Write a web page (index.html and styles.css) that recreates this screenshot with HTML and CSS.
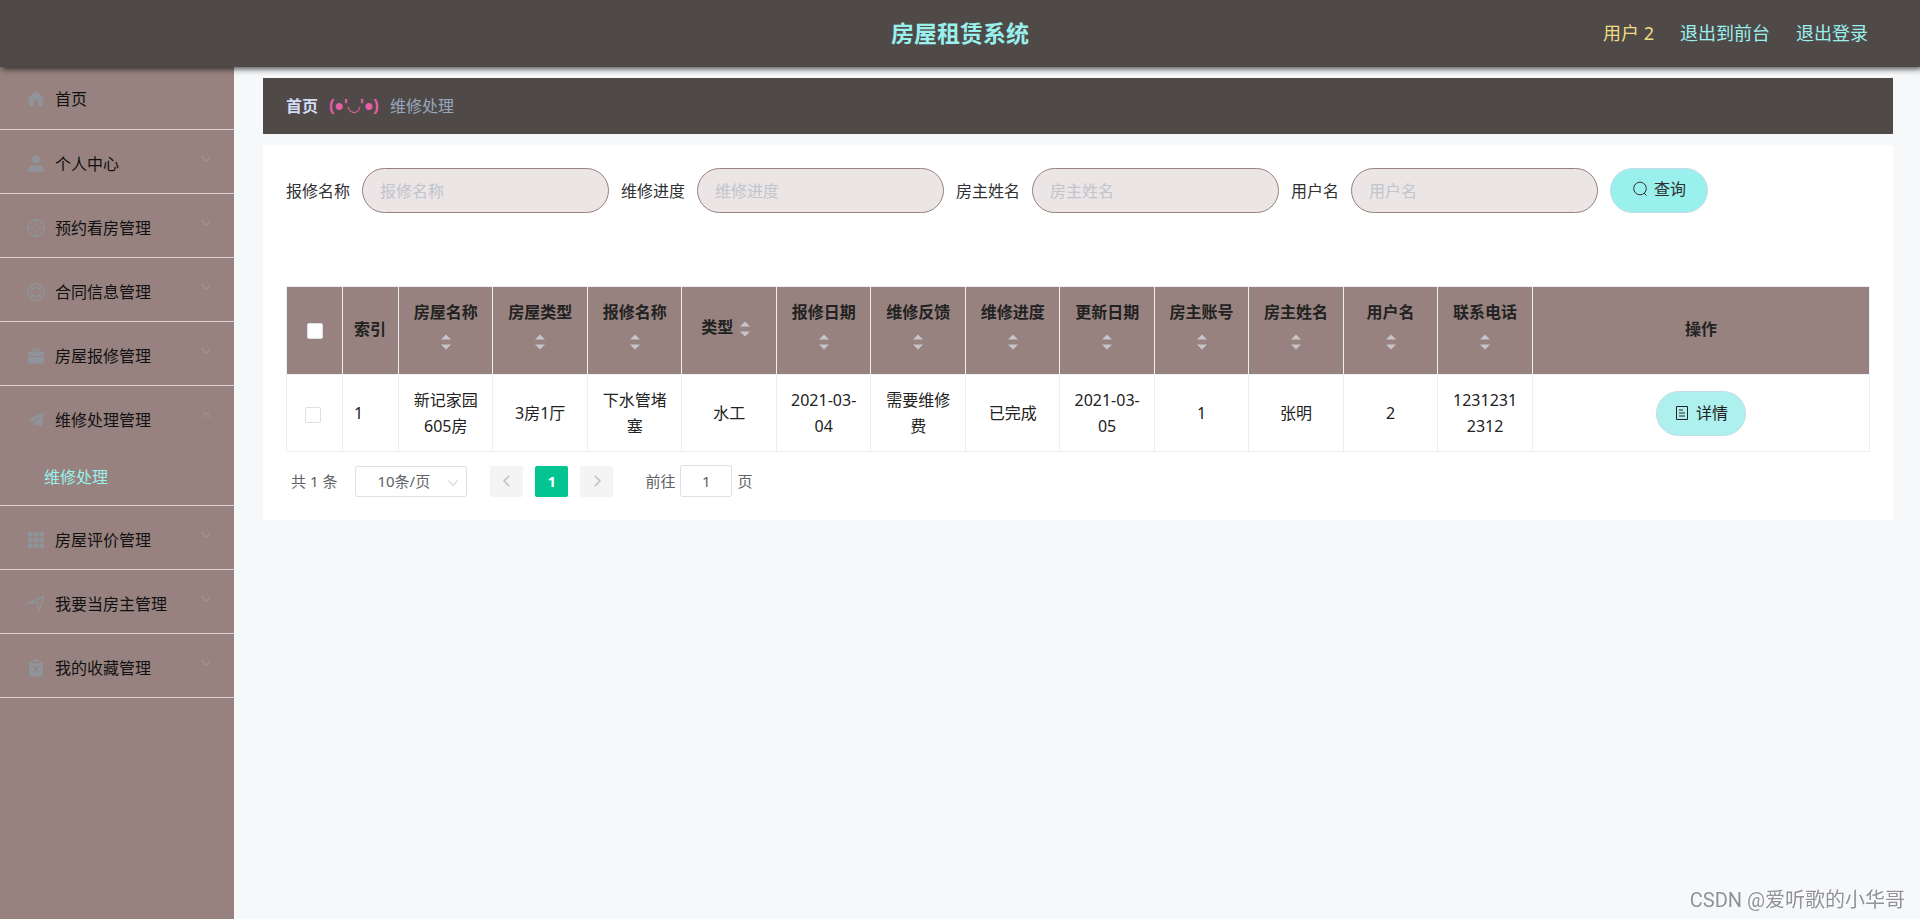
FILE: index.html
```html
<!DOCTYPE html>
<html lang="zh-CN">
<head>
<meta charset="utf-8">
<title>房屋租赁系统</title>
<link rel="stylesheet" href="styles.css">
</head>
<body>
<svg class="sprite" aria-hidden="true">
  <symbol id="down" viewBox="0 0 12 12"><path d="M1.500 3.500 6 8.500l4.500-5" fill="none" stroke="currentColor"/></symbol>
  <symbol id="up" viewBox="0 0 12 12"><path d="M1.500 8.500 6 3.500l4.500 5" fill="none" stroke="currentColor"/></symbol>
  <symbol id="sort" viewBox="0 0 10 16"><path d="M0 5.500 5 .5l5 5zM0 10.500l5 5 5-5z" fill="currentColor"/></symbol>
</svg>
<header class="topbar">
  <h1 class="topbar-title">房屋租赁系统</h1>
  <nav class="topbar-nav">
    <span class="user">用户 2</span>
    <a class="top-link" href="#">退出到前台</a>
    <a class="top-link" href="#">退出登录</a>
  </nav>
</header>
<div class="layout">
  <nav class="sidebar">
    <ul class="menu">
      <li class="menu-group home"><a class="menu-item" href="#">
        <svg class="menu-icon" viewBox="0 0 18 18"><path d="M9 1 .800 8v1.500h1.400V16.500h4.600v-4a2.200 2.200 0 0 1 4.400 0v4h4.600V9.500h1.400V8z" fill="currentColor"/></svg>
        <span class="menu-text">首页</span></a></li>
      <li class="menu-group"><button class="menu-item" type="button">
        <svg class="menu-icon" viewBox="0 0 18 18"><circle cx="9" cy="4.500" r="4" fill="currentColor"/><path d="M1.500 17v-2.500a4 4 0 0 1 4-4h7a4 4 0 0 1 4 4V17z" fill="currentColor"/></svg>
        <span class="menu-text">个人中心</span><svg class="menu-arrow"><use href="#down"/></svg></button></li>
      <li class="menu-group"><button class="menu-item" type="button">
        <svg class="menu-icon" viewBox="0 0 18 18"><path d="M9 .5v6M9 11.500v6M.5 9h6M11.500 9h6" fill="none" stroke="currentColor"/><circle cx="9" cy="9" r="8.300" fill="none" stroke="currentColor" stroke-width="1.400"/></svg>
        <span class="menu-text">预约看房管理</span><svg class="menu-arrow"><use href="#down"/></svg></button></li>
      <li class="menu-group"><button class="menu-item" type="button">
        <svg class="menu-icon" viewBox="0 0 18 18"><g fill="none" stroke="currentColor" stroke-width="1.400"><circle cx="9" cy="9" r="8.200"/><circle cx="9" cy="9" r="4.500"/><path d="m3 3 3 3M12 12l3 3M15 3l-3 3M6 12l-3 3"/></g></svg>
        <span class="menu-text">合同信息管理</span><svg class="menu-arrow"><use href="#down"/></svg></button></li>
      <li class="menu-group"><button class="menu-item" type="button">
        <svg class="menu-icon" viewBox="0 0 18 18"><path d="M1 9V4.500h4.500V1.500h7v3H17V9zM6.500 4.500h5v-2h-5zM1 10h16v6.500H1z" fill="currentColor" fill-rule="evenodd"/></svg>
        <span class="menu-text">房屋报修管理</span><svg class="menu-arrow"><use href="#down"/></svg></button></li>
      <li class="menu-group"><button class="menu-item" type="button" aria-expanded="true">
        <svg class="menu-icon" viewBox="0 0 18 18"><path d="M1 8.500 17 1 14.500 15.500 10 13.500 7.500 16.500v-4.500L14 4.500 6 11z" fill="currentColor"/></svg>
        <span class="menu-text">维修处理管理</span><svg class="menu-arrow"><use href="#up"/></svg></button>
        <a class="submenu-item" href="#">维修处理</a></li>
      <li class="menu-group"><button class="menu-item" type="button">
        <svg class="menu-icon" viewBox="0 0 18 18"><path d="M1 1h4.500v4.500H1zM6.750 1h4.500v4.500h-4.500zM12.500 1H17v4.500h-4.500zM1 6.750h4.500v4.500H1zM6.750 6.750h4.500v4.500h-4.500zM12.500 6.750H17v4.500h-4.500zM1 12.500h4.500V17H1zM6.750 12.500h4.500V17h-4.500zM12.500 12.500H17V17h-4.500z" fill="currentColor"/></svg>
        <span class="menu-text">房屋评价管理</span><svg class="menu-arrow"><use href="#down"/></svg></button></li>
      <li class="menu-group"><button class="menu-item" type="button">
        <svg class="menu-icon" viewBox="0 0 18 18"><path d="M1.500 8 16.500 1.500 12 16.500 10.500 7.500z" fill="none" stroke="currentColor" stroke-width="1.400" stroke-linejoin="round"/></svg>
        <span class="menu-text">我要当房主管理</span><svg class="menu-arrow"><use href="#down"/></svg></button></li>
      <li class="menu-group"><button class="menu-item" type="button">
        <svg class="menu-icon" viewBox="0 0 18 18"><path d="M2 2.500h3v1.500h8V2.500h3V17.500H2zM6 .5h6V3H6zM5.800 7.300 8.200 10 5.800 12.700 6.600 13.500 9 10.900l2.400 2.600.8-.8L9.800 10l2.400-2.700-.8-.8L9 9.100 6.600 6.500z" fill="currentColor" fill-rule="evenodd"/></svg>
        <span class="menu-text">我的收藏管理</span><svg class="menu-arrow"><use href="#down"/></svg></button></li>
    </ul>
  </nav>
  <main class="main">
    <nav class="breadcrumb">
      <a class="crumb-home" href="#">首页</a>
      <span class="crumb-face">(●'◡'●)</span>
      <span class="crumb-current">维修处理</span>
    </nav>
    <section class="card">
      <form class="search">
        <div class="field"><label for="f1">报修名称</label><input id="f1" type="text" placeholder="报修名称"></div>
        <div class="field"><label for="f2">维修进度</label><input id="f2" type="text" placeholder="维修进度"></div>
        <div class="field"><label for="f3">房主姓名</label><input id="f3" type="text" placeholder="房主姓名"></div>
        <div class="field"><label for="f4">用户名</label><input id="f4" type="text" placeholder="用户名"></div>
        <button class="pill query" type="button"><svg class="pill-icon" viewBox="0 0 16 16"><circle cx="8" cy="7.500" r="6.300" fill="none" stroke="currentColor"/><path d="m12 12 2.500 2.500" stroke="currentColor"/></svg>查询</button>
      </form>
      <table class="grid">
        <colgroup><col class="col-small"><col class="col-small"><col span="12"><col class="col-action"></colgroup>
        <thead>
          <tr>
            <th><input class="check check-all" type="checkbox" aria-label="全选"></th>
            <th class="left">索引</th>
            <th>房屋名称<svg class="sort"><use href="#sort"/></svg></th>
            <th>房屋类型<svg class="sort"><use href="#sort"/></svg></th>
            <th>报修名称<svg class="sort"><use href="#sort"/></svg></th>
            <th>类型<svg class="sort"><use href="#sort"/></svg></th>
            <th>报修日期<svg class="sort"><use href="#sort"/></svg></th>
            <th>维修反馈<svg class="sort"><use href="#sort"/></svg></th>
            <th>维修进度<svg class="sort"><use href="#sort"/></svg></th>
            <th>更新日期<svg class="sort"><use href="#sort"/></svg></th>
            <th>房主账号<svg class="sort"><use href="#sort"/></svg></th>
            <th>房主姓名<svg class="sort"><use href="#sort"/></svg></th>
            <th>用户名<svg class="sort"><use href="#sort"/></svg></th>
            <th>联系电话<svg class="sort"><use href="#sort"/></svg></th>
            <th>操作</th>
          </tr>
        </thead>
        <tbody>
          <tr>
            <td class="pick"><input class="check" type="checkbox" aria-label="选择第 1 行"></td>
            <td class="left">1</td>
            <td>新记家园605房</td>
            <td>3房1厅</td>
            <td>下水管堵塞</td>
            <td>水工</td>
            <td>2021-03-04</td>
            <td>需要维修费</td>
            <td>已完成</td>
            <td>2021-03-05</td>
            <td>1</td>
            <td>张明</td>
            <td>2</td>
            <td>12312312312</td>
            <td class="action"><button class="pill detail" type="button"><svg class="pill-icon" viewBox="0 0 16 16"><path d="M2.500 1.500h11v13h-11zM5 5h4M5 8h6M5 11h6" fill="none" stroke="currentColor"/></svg>详情</button></td>
          </tr>
        </tbody>
      </table>
      <div class="pager">
        <span class="total">共 1 条</span>
        <span class="size"><select aria-label="每页条数"><option>10条/页</option></select><svg class="size-arrow"><use href="#down"/></svg></span>
        <button class="page" type="button" aria-label="上一页"><svg class="page-icon" viewBox="0 0 12 12"><path d="M8 1.500 3.500 6 8 10.500" fill="none" stroke="currentColor" stroke-width="1.500"/></svg></button>
        <button class="page active" type="button">1</button>
        <button class="page" type="button" aria-label="下一页"><svg class="page-icon" viewBox="0 0 12 12"><path d="M4 1.500 8.500 6 4 10.500" fill="none" stroke="currentColor" stroke-width="1.500"/></svg></button>
        <label class="jump">前往<input type="text" value="1">页</label>
      </div>
    </section>
  </main>
</div>
<p class="watermark">CSDN @爱听歌的小华哥</p>
</body>
</html>
```
FILE: styles.css
```css
* { box-sizing: border-box; }
body {
  margin: 0;
  min-height: 100vh;
  display: flex;
  flex-direction: column;
  background: #f6f8fa;
  color: #303133;
  font: 16px/26px "Noto Sans", "Noto Sans CJK SC", sans-serif;
}
button, input, select { font: inherit; color: inherit; margin: 0; }
button { cursor: pointer; }
a { text-decoration: none; color: inherit; }
.sprite { display: none; }

.topbar {
  display: grid;
  grid-template-columns: 1fr auto 1fr;
  align-items: center;
  height: 67px;
  padding: 0 52px 2px;
  background: #4f4948;
  box-shadow: 2px 2px 6px rgba(0, 0, 0, .7);
  z-index: 1;
}
.topbar-title { grid-column: 2; margin: 0; font-size: 23px; color: #99f0ed; }
.topbar-nav { display: flex; justify-content: flex-end; gap: 26px; font-size: 18px; color: #99f0ed; }
.user { color: #f0dc82; }

.layout { display: flex; flex: 1; }
.sidebar { flex: none; width: 234px; background: #97827f; }
.menu { list-style: none; margin: 0; padding: 0; }
.menu-group { border-bottom: 1px solid #ded3d1; }
.menu-item {
  display: flex;
  align-items: center;
  width: 100%;
  height: 63px;
  padding: 5px 22px 0 27px;
  border: 0;
  background: none;
  color: #111;
  text-align: left;
}
.home .menu-item { height: 62px; padding-top: 2px; }
.menu-icon { width: 18px; height: 18px; margin-right: 10px; color: #909399; }
.menu-text { flex: 1; }
.menu-arrow { width: 12px; height: 12px; margin-bottom: 10px; color: #a89a9a; }
.submenu-item { display: block; padding: 15px 44px; color: #99f0ed; }

.main { flex: 1; min-width: 0; padding: 11px 27px 40px 29px; }
.breadcrumb {
  display: flex;
  align-items: center;
  gap: 11px;
  height: 56px;
  padding: 0 23px;
  background: #4f4948;
}
.crumb-home { font-weight: 700; color: #d3dcf5; }
.crumb-face { font-family: "Liberation Sans", "DejaVu Sans", sans-serif; font-weight: 700; color: #e85fa8; }
.crumb-current { color: #97a8be; }
.card { margin-top: 11px; padding: 23px; background: #fff; }

.search { display: flex; flex-wrap: wrap; gap: 12px; margin-bottom: 73px; }
.field { display: flex; align-items: center; gap: 12px; }
.field input {
  width: 247px;
  height: 45px;
  padding: 0 17px;
  border: 1px solid #97827f;
  border-radius: 23px;
  background: #ebe5e5;
}
.field input::placeholder { color: #c0c4cc; }
.pill {
  display: inline-flex;
  align-items: center;
  gap: 6px;
  height: 45px;
  border: 1px solid #c5dbe6;
  border-radius: 23px;
}
.pill-icon { width: 16px; height: 16px; }
.query { padding: 0 21px 3px; background: #99f0ed; }
.detail { padding: 0 17px; background: #adf0ee; }

.grid {
  width: 100%;
  table-layout: fixed;
  border-collapse: collapse;
  border: 1px solid #ebeef5;
  color: #222;
}
.col-small { width: 56px; }
.col-action { width: 21.3%; }
.grid th, .grid td {
  padding: 12px 11px;
  border: 1px solid #ebeef5;
  text-align: center;
  word-break: break-all;
}
.grid th { background: #97827f; height: 88px; padding: 9px 11px 12px; }
.grid .left { text-align: left; }
.grid td.action { padding: 0 11px; }
.sort { width: 24px; height: 34px; padding: 9px 7px; vertical-align: middle; color: #c9c4ca; }
.check {
  appearance: none;
  display: inline-block;
  width: 16px;
  height: 16px;
  border: 1px solid #dcdfe6;
  border-radius: 2px;
  background: #fff;
  vertical-align: middle;
}
.grid td.pick { padding-right: 15px; }

.pager { display: flex; align-items: center; margin-top: 13px; padding-left: 5px; font-size: 15px; color: #606266; }
.size { position: relative; margin: 0 23px 0 18px; }
.size select {
  appearance: none;
  display: block;
  width: 112px;
  height: 31px;
  padding: 0 21px;
  border: 1px solid #dcdfe6;
  border-radius: 3px;
  background: #fff;
  font-size: 15px;
}
.size-arrow { position: absolute; right: 8px; top: 11px; width: 12px; height: 12px; color: #c0c4cc; }
.page {
  display: flex;
  align-items: center;
  justify-content: center;
  width: 33px;
  height: 31px;
  margin-right: 12px;
  padding: 0;
  border: 0;
  border-radius: 2px;
  background: #f4f4f5;
  color: #c0c4cc;
  font-weight: 700;
}
.page-icon { width: 14px; height: 14px; }
.page.active { background: #04c491; color: #fff; }
.jump { display: flex; align-items: center; gap: 5px; margin-left: 20px; }
.jump input {
  width: 52px;
  height: 32px;
  padding: 0;
  border: 1px solid #dcdfe6;
  border-radius: 3px;
  text-align: center;
}
.watermark {
  position: fixed;
  right: 15px;
  bottom: 5px;
  margin: 0;
  font: 20px/28px Roboto, "Noto Sans CJK SC", sans-serif;
  color: #909296;
  text-shadow: -1px -1px #fff;
}
```
